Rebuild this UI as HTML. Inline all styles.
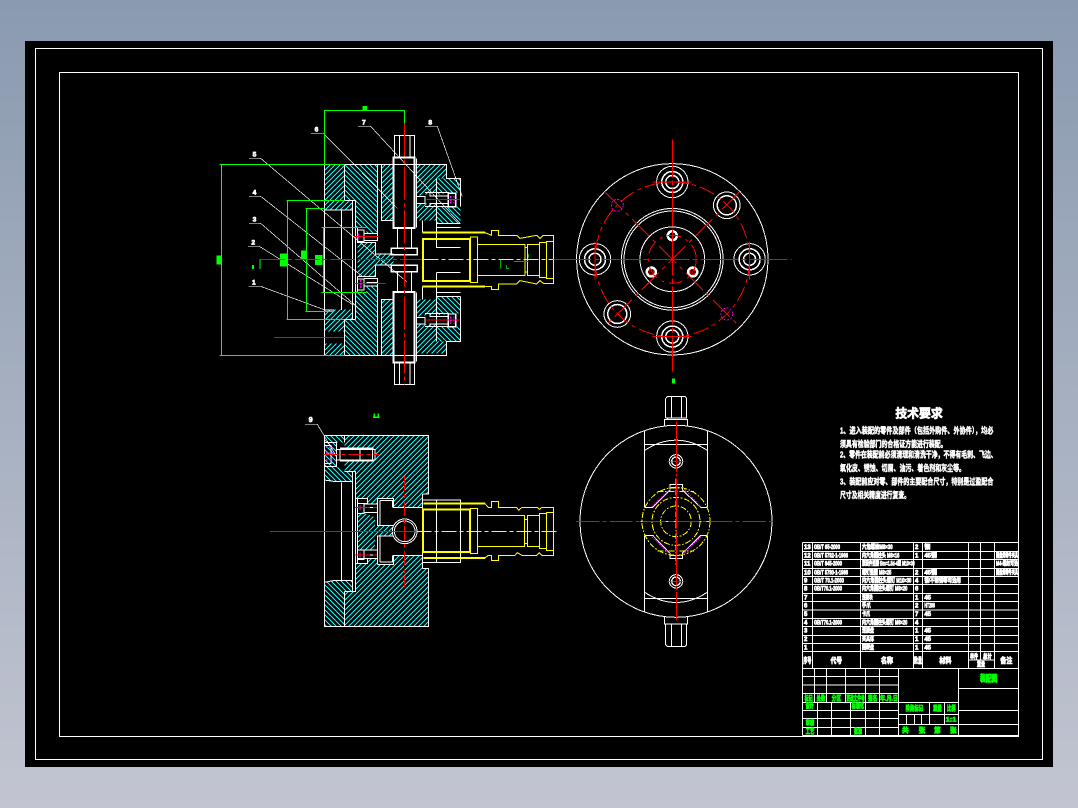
<!DOCTYPE html>
<html><head><meta charset="utf-8">
<style>
html,body{margin:0;padding:0;width:1078px;height:808px;overflow:hidden;background:linear-gradient(#8a9ab0,#c2c5d1)}
svg{display:block;position:absolute;left:0;top:0;shape-rendering:crispEdges}
text{font-family:"Liberation Sans","Noto Sans CJK SC",sans-serif;font-weight:700}
</style></head><body>
<svg width="1078" height="808" viewBox="0 0 1078 808" xmlns="http://www.w3.org/2000/svg" fill="none">
<defs>
<pattern id="a" patternUnits="userSpaceOnUse" width="15" height="15"><path d="M-3 18L18 -3M-3 3L3 -3M12 18L18 12" stroke="#00ffff" stroke-width="3" shape-rendering="crispEdges"/></pattern>
<pattern id="b" patternUnits="userSpaceOnUse" width="15" height="15"><path d="M-3 -3L18 18M-3 12L3 18M12 -3L18 3" stroke="#00ffff" stroke-width="3" shape-rendering="crispEdges"/></pattern>
</defs>
<rect x="25" y="41" width="1028" height="726" fill="#000"/>
<g stroke="#fff" stroke-width="1">
<rect x="35.500" y="48.500" width="1007" height="711"/>
<rect x="59.500" y="72.500" width="959" height="664"/>
</g>

<!-- MAIN VIEW -->
<g transform="translate(210 90) scale(.33333)" stroke-width="3" stroke-linejoin="miter">
<g stroke="none">
<path fill="url(#a)" d="M343 223H403V331H427V360H343ZM372 658H427V688H403V725H343V660ZM343 760H403V796H343Z"/>
<path fill="url(#b)" d="M403 223H503V430H470V412H437V331H403ZM403 688H437V605H470V590H503V796H403Z"/>
<path fill="url(#a)" d="M443 458H497V492H550V525H497V560H443Z"/>
<path fill="url(#a)" d="M514 223H550V392H514ZM514 628H550V796H514Z"/>
<path fill="url(#a)" d="M620 223H710V265H680V308L620 318ZM620 340H680V392H620ZM620 628H680V672L620 680ZM620 702H680V755H710V790H620Z"/>
<path fill="url(#b)" d="M680 265H752V308H715L680 315ZM680 350H752V400H680ZM680 620H752V670L680 675ZM680 710H752V755H680Z"/>
</g>
<g stroke="#fff">
<path d="M343 223H710V265H752V350M343 223V796H710V755H752V620M514 223V392H550M514 796V628H550M403 223V331M403 688V796"/>
<path d="M343 360H427M427 331V688M437 331V688M403 331H437M403 688H437M343 660H372M394 360V660"/>
<path d="M503 223V430M503 590V796M620 223V392M620 628V790"/>
<path d="M680 265V472H752M680 400H752M680 412H752M680 547V755M680 547H752M680 608H752M680 620H752M637 392V428M637 590V628"/>
<path d="M620 320H645V340H620M645 308H715V350H645M660 308V318H715M660 350V340H715"/>
<path d="M620 682H645V702H620M645 670H715V710H645M660 670V680H715M660 710V702H715"/>
<rect x="715" y="310" width="22" height="40" stroke-width="4"/>
<rect x="715" y="672" width="22" height="38" stroke-width="4"/>
<path d="M443 412V458H497V492H550M443 560V605M497 525H550M497 525V560H443"/>
<path d="M443 420H462V455H443M443 567H462V600H443M462 430H503V452H462M462 440H505M462 565H503V588H462M470 578H503"/>
<rect x="551" y="202" width="62" height="212" stroke-width="6"/>
<rect x="551" y="606" width="62" height="212" stroke-width="6"/>
<path d="M553 200V136H613V200M569 136V200M600 136V200M620 205V412M620 607V815M553 820V883H613V820M569 820V883M600 820V883"/>
<path d="M562 414V475M604 414V475M562 543V604M604 543V604"/>
<rect x="544" y="475" width="78" height="19" stroke-width="4"/>
<rect x="544" y="526" width="78" height="19" stroke-width="4"/>
</g>
<g stroke="#fff" stroke-width="2">
<path d="M117 205H152L590 575M117 319H152L458 560M117 400H152L458 665M114 469H148L430 645M115 589H152L345 660M303 130H340L562 355M444 109H482L750 400M645 109H682L757 320"/>
</g>
<g stroke="#0f0">
<path d="M343 223V62H583V130M28 223H403M28 796H403M34 223V796M229 331H403M229 688H403M232 331V688M286 355H343M286 664H372M290 355V664M334 412H470M334 607H470M340 412V607M150 537V508H170"/>
</g>
<g fill="#0f0" stroke="none">
<rect x="458" y="48" width="13" height="14"/><rect x="20" y="497" width="15" height="27"/><rect x="210" y="490" width="23" height="40"/><rect x="273" y="482" width="18" height="25"/><rect x="315" y="495" width="22" height="30"/><rect x="126" y="525" width="6" height="12"/>
</g>
<g stroke="#f00">
<path d="M150 508H640" stroke-dasharray="75 9 12 9"/>
<path d="M583 100V884" stroke-dasharray="100 9 12 9"/>
<path d="M192 742H400M432 440H506M432 580H527M650 328H748M650 690H748"/>
</g>
<path d="M640 508H1048" stroke="#ff0" stroke-dasharray="45 9 12 9"/>
<g stroke="#ff0">
<rect x="639" y="447" width="141" height="126" stroke-width="6"/>
<path d="M638 428H825M638 590H825" stroke-width="6"/>
<path d="M825 428L845 436V422H865V436H920L930 445L980 436L990 445L1000 436H1030V580H1000L990 572L980 582L930 572L920 582H865V598H845V590H825"/>
<rect x="782" y="441" width="21" height="136"/>
<path d="M803 463H945V557H803M945 473H953V546H945"/>
<rect x="953" y="464" width="35" height="92"/><rect x="988" y="458" width="21" height="105"/><rect x="1009" y="454" width="22" height="112"/>
</g>
<path d="M872 510V535M890 525V536H897M912 515H955M955 492V504" stroke="#0a0"/>
<g stroke="#f0f" stroke-width="4" stroke-dasharray="6 3">
<path d="M722 318V340M732 318V340M722 680V702M732 680V702M445 430V450M452 570V595"/>
</g>
<g fill="#fff" stroke="#fff" stroke-width="2" font-size="20">
<text x="128" y="200">5</text><text x="128" y="314">4</text><text x="128" y="395">3</text><text x="124" y="464">2</text><text x="126" y="584">1</text><text x="314" y="125">6</text><text x="456" y="104">7</text><text x="655" y="104">8</text>
</g>
</g>

<!-- TOP RIGHT CIRCLE VIEW -->
<g transform="translate(672.3 259.3)" stroke-width="1">
<g stroke="#fff">
<circle r="95.700"/><circle r="50.800"/><circle r="48.300"/><circle r="32.300"/>
<circle cx="0" cy="-77.300" r="15.700"/><circle cx="0" cy="-77.300" r="10.500" stroke-width="1.500"/><circle cx="0" cy="-77.300" r="6.500" stroke-width="1.500"/>
<circle cx="0" cy="77.300" r="15.700"/><circle cx="0" cy="77.300" r="10.500" stroke-width="1.500"/><circle cx="0" cy="77.300" r="6.500" stroke-width="1.500"/>
<circle cx="-77.300" r="15.700"/><circle cx="-77.300" r="10.500" stroke-width="1.500"/><circle cx="-77.300" r="6" stroke-width="1.500"/>
<circle cx="77.300" r="15.700"/><circle cx="77.300" r="10.500" stroke-width="1.500"/><circle cx="77.300" r="6" stroke-width="1.500"/>
<circle cx="54.500" cy="-54" r="13.300"/><circle cx="54.500" cy="-54" r="9.500" stroke-width="1.500"/>
<circle cx="-55" cy="54.700" r="13.300"/><circle cx="-55" cy="54.700" r="9.500" stroke-width="1.500"/>
<circle cx="0" cy="-23.600" r="4.500" stroke-width="2.500"/><circle cx="-21" cy="12.700" r="4.500" stroke-width="2.500"/><circle cx="20.400" cy="12.700" r="4.500" stroke-width="2.500"/>
</g>
<g stroke="#f00">
<circle r="77.300" stroke-dasharray="16 4 4 4"/>
<circle r="24" stroke-dasharray="14 5 3 5"/>
<path d="M-119 0H119M0 -120V112" stroke-dasharray="38 3 5 3"/>
<path d="M-67 -67L67 67M67 -67L-67 67" stroke-dasharray="24 5 4 5"/>
<path d="M-20 -77.300H19M-20 77.300H19M-77.300 -18V20M77.300 -18V20M-5 -23.600H5M0 -29V-18"/>
<circle cx="-21" cy="12.700" r="2.500"/><circle cx="20.400" cy="12.700" r="2.500"/>
</g>
<g stroke="#e000e0" stroke-dasharray="2 1.500"><circle cx="-55" cy="-54" r="6"/><circle cx="54.500" cy="54.700" r="6"/></g>
<rect x="-0.500" y="119" width="3" height="5" fill="#0f0"/>
</g>

<!-- BOTTOM LEFT SECTION -->
<g transform="translate(260 400) scale(.33333)" stroke-width="3">
<g stroke="none">
<path fill="url(#a)" d="M253 106H505V282H487V322H400V295H352V312H322V295H288V214H253V182L345 178V148H253Z"/>
<path fill="url(#a)" d="M253 574H288V490H322V476H352V494H400V466H487V505H505V680H253Z"/>
<path fill="url(#b)" d="M193 106H253V128H230V200H193ZM193 200H230L253 214H277V247L220 244L193 240ZM193 547L225 541H277V574H253V680H193Z"/>
<path fill="url(#a)" d="M293 338H312L345 352V376H400V410H345V448L293 450Z"/>
</g>
<g stroke="#fff">
<path d="M487 282H505V106H193V680H505V505H487M253 106V128M253 574V680"/>
<path d="M193 128H230V200H193M195 137H213V190H195M230 148H345V180H230M240 148V180M300 148V180M337 148V178" stroke-width="3"/>
<path d="M240 145H340M240 182H340" stroke-width="4"/>
<path d="M253 214H287V574H253M277 214V574M193 240L220 244H277M244 247V541M193 547L225 541H277"/>
<path d="M293 295V490M288 295H322V310H293M288 490H322V476H293M293 340H312V310H293M293 450H312V478H293M312 312H352V338H312M312 450H352V476H312M322 322H352M322 465H352"/>
<path d="M352 295H400V322H487M352 295V376H400M360 302H397V322M360 302V376M352 494H400V466H487M352 494V408H400M360 486H397V466M360 486V410"/>
<circle cx="434" cy="394" r="37"/><circle cx="434" cy="394" r="31"/>
<path d="M487 300H602V488H487M529 300V488M487 282V505"/>
</g>
<path d="M135 73H172L230 170" stroke="#fff" stroke-width="2"/>
<path d="M30 394H470" stroke="#f00"/>
<path d="M433 228V562M190 163H360M285 322H352M285 465H352" stroke="#f00" stroke-dasharray="45 9 12 9"/>
<path d="M470 394H897" stroke="#ff0" stroke-dasharray="45 9 12 9"/>
<g stroke="#ff0">
<rect x="489" y="329" width="141" height="127" stroke-width="6"/>
<path d="M490 311H675M490 474H675" stroke-width="6"/>
<path d="M675 311L685 322H694V304H716V322H770L776 331L786 322H832L838 328L846 322H881V466H846L838 458L830 466H786L772 458L765 466H716V482H694V466H685L675 474"/>
<rect x="632" y="325" width="21" height="136"/>
<path d="M653 346H793V439H653M793 358H803V430H793"/>
<rect x="803" y="346" width="35" height="93"/><rect x="838" y="341" width="21" height="104"/><rect x="859" y="337" width="22" height="114"/>
</g>
<g stroke="#f0f" stroke-width="4" stroke-dasharray="6 3">
<path d="M198 142H218M198 160H222M198 180H218M300 315V330M300 458V474"/>
</g>
<text x="146" y="66" font-size="22" fill="#fff" stroke="#fff" stroke-width="2">9</text>
<path d="M339 52H359M343 40V52M355 40V52" stroke="#0f0" stroke-width="4"/>
</g>

<!-- BOTTOM RIGHT VIEW -->
<g transform="translate(570 390) scale(.33333)" stroke-width="3">
<g stroke="#fff">
<circle cx="318" cy="394" r="288"/>
<path d="M223 122V352M413 122V352M223 436V666M413 436V666M223 163H413M223 625H413"/>
<path d="M223 182C285 140 351 140 413 182M223 606C285 648 351 648 413 606"/>
<path d="M223 352H248L300 300V283H337V300L392 352H413M223 436H248L300 490V505H337V490L392 436H413"/>
<path d="M283 110V88H352V110M293 88V84M287 84V26L293 19H345L350 26V84H287M304 19V84M335 19V84" />
<path d="M283 680V702H352V680M287 702V764L293 770H345L350 764V702ZM304 702V770M335 702V770"/>
<circle cx="318" cy="214" r="20"/><circle cx="318" cy="214" r="13" stroke-width="4"/>
<circle cx="318" cy="574" r="20"/><circle cx="318" cy="574" r="13" stroke-width="4"/>
</g>
<g stroke="#ff0" stroke-dasharray="18 5 5 5">
<circle cx="318" cy="394" r="102"/><circle cx="318" cy="394" r="72"/><circle cx="318" cy="394" r="46"/>
<path d="M212 394H425M318 265V525M262 305H372M262 483H372M300 294H337M300 497H337"/>
</g>
<path d="M245 350L300 298M338 292L392 350M245 440L300 492M338 494L392 440" stroke="#f0f" stroke-dasharray="5 3"/>
<path d="M18 394H615" stroke="#f00" stroke-dasharray="70 9 12 9"/>
<path d="M319 96V692" stroke="#f00" stroke-dasharray="150 6 8 6"/>
<path d="M292 214H344M292 574H344" stroke="#f00" stroke-dasharray="12 3"/>
</g>

<!-- TECH TEXT -->
<g transform="translate(830 400) scale(.33333)" fill="#fff" stroke="#fff" stroke-width="1.500">
<text x="196" y="52" font-size="36" textLength="142" lengthAdjust="spacingAndGlyphs" stroke-width="2">技术要求</text>
<g font-size="25">
<text x="30" y="101" textLength="460" lengthAdjust="spacingAndGlyphs">1、进入装配的零件及部件（包括外购件、外协件），均必</text>
<text x="30" y="141" textLength="320" lengthAdjust="spacingAndGlyphs">须具有检验部门的合格证方能进行装配。</text>
<text x="30" y="172" textLength="470" lengthAdjust="spacingAndGlyphs">2、零件在装配前必须清理和清洗干净，不得有毛刺、飞边、</text>
<text x="30" y="213" textLength="375" lengthAdjust="spacingAndGlyphs">氧化皮、锈蚀、切屑、油污、着色剂和灰尘等。</text>
<text x="30" y="254" textLength="460" lengthAdjust="spacingAndGlyphs">3、装配前应对零、部件的主要配合尺寸，特别是过盈配合</text>
<text x="30" y="294" textLength="210" lengthAdjust="spacingAndGlyphs">尺寸及相关精度进行复查。</text>
</g>
</g>

<!-- TITLE BLOCK -->
<g transform="translate(800 540) scale(.33333)">
<g stroke="#fff" stroke-width="3">
<path d="M7 8H655M7 34H655M7 59H655M7 85H655M7 110H655M7 134H655M7 160H655M7 185H655M7 210H655M7 236H655M7 260H655M7 286H655M7 311H655M7 335H655M7 385H655M7 586H655"/>
<path d="M7 8V586M37 8V385M181 8V385M340 8V385M367 8V385M505 8V385M541 8V360M583 8V385M655 8V586"/>
<path d="M505 360H583"/>
<path d="M7 410H295M7 435H295M7 461H295M7 487H295M7 511H295M7 536H295M7 562H295"/>
<path d="M44 385V487M79 385V487M136 385V487M196 385V586M238 385V586M53 487V586M94 487V586M152 487V586M295 385V586M475 385V586"/>
<path d="M295 487H475M295 523H475M295 553H475M388 487V553M433 487V553M319 523V553M343 523V553M365 523V553"/>
<path d="M475 445H655M475 511H655M475 553H655"/>
</g>
<g fill="#fff" stroke="#fff" stroke-width="2.200" font-size="18">
<text x="12" y="27">13</text><text x="42" y="27" textLength="78" lengthAdjust="spacingAndGlyphs">GB/T 65-2000</text><text x="186" y="27" textLength="92" lengthAdjust="spacingAndGlyphs">六角螺栓M8×30</text><text x="345" y="27">2</text><text x="373" y="27">钢</text>
<text x="12" y="52">12</text><text x="42" y="52" textLength="102" lengthAdjust="spacingAndGlyphs">GB/T 5782-1-1986</text><text x="186" y="52" textLength="112" lengthAdjust="spacingAndGlyphs">内六角圆柱头 M8×16</text><text x="345" y="52">1</text><text x="373" y="52">45钢</text>
<text x="12" y="77">11</text><text x="42" y="77" textLength="84" lengthAdjust="spacingAndGlyphs">GB/T 845-2000</text><text x="186" y="77" textLength="158" lengthAdjust="spacingAndGlyphs">紧固件连接 Bm=1.5d-4型 M10×30</text>
<text x="12" y="103">10</text><text x="42" y="103" textLength="102" lengthAdjust="spacingAndGlyphs">GB/T 5780-1-1986</text><text x="186" y="103" textLength="88" lengthAdjust="spacingAndGlyphs">螺钉垫圈 M8×25</text><text x="345" y="103">2</text><text x="373" y="103">45钢</text>
<text x="12" y="127">9</text><text x="42" y="127" textLength="90" lengthAdjust="spacingAndGlyphs">GB/T 70.1-2000</text><text x="186" y="127" textLength="148" lengthAdjust="spacingAndGlyphs">内六角圆柱头螺钉 M10×30</text><text x="345" y="127">4</text><text x="373" y="127" textLength="110" lengthAdjust="spacingAndGlyphs">钢/不锈钢等可选用</text>
<text x="12" y="152">8</text><text x="42" y="152" textLength="84" lengthAdjust="spacingAndGlyphs">GB/T70.1-2000</text><text x="186" y="152" textLength="136" lengthAdjust="spacingAndGlyphs">内六角圆柱头螺钉 M8×20</text><text x="345" y="152">6</text>
<text x="12" y="178">7</text><text x="186" y="178" textLength="32" lengthAdjust="spacingAndGlyphs">连接块</text><text x="345" y="178">1</text><text x="373" y="178">45</text>
<text x="12" y="202">6</text><text x="186" y="202" textLength="26" lengthAdjust="spacingAndGlyphs">手爪</text><text x="345" y="202">2</text><text x="373" y="202" textLength="32" lengthAdjust="spacingAndGlyphs">HT200</text>
<text x="12" y="228">5</text><text x="186" y="228" textLength="24" lengthAdjust="spacingAndGlyphs">卡爪</text><text x="345" y="228">7</text><text x="373" y="228">45</text>
<text x="12" y="253">4</text><text x="42" y="253" textLength="84" lengthAdjust="spacingAndGlyphs">GB/T70.1-2000</text><text x="186" y="253" textLength="136" lengthAdjust="spacingAndGlyphs">内六角圆柱头螺钉 M6×20</text><text x="345" y="253">4</text>
<text x="12" y="278">3</text><text x="186" y="278" textLength="36" lengthAdjust="spacingAndGlyphs">连接盘</text><text x="345" y="278">1</text><text x="373" y="278">45</text>
<text x="12" y="303">2</text><text x="186" y="303" textLength="36" lengthAdjust="spacingAndGlyphs">夹具体</text><text x="345" y="303">1</text><text x="373" y="303">45</text>
<text x="12" y="329">1</text><text x="186" y="329" textLength="36" lengthAdjust="spacingAndGlyphs">回转盘</text><text x="345" y="329">1</text><text x="373" y="329">45</text>
<text x="588" y="52" textLength="66" lengthAdjust="spacingAndGlyphs">圆盘类零件夹具</text><text x="588" y="77" textLength="66" lengthAdjust="spacingAndGlyphs">M4-螺纹可选</text><text x="588" y="103" textLength="66" lengthAdjust="spacingAndGlyphs">圆盘类零件夹具</text>
</g>
<g fill="#fff" stroke="#fff" stroke-width="2.500" font-size="23">
<text x="10" y="369" textLength="24" lengthAdjust="spacingAndGlyphs">序号</text><text x="92" y="369" textLength="34" lengthAdjust="spacingAndGlyphs">代号</text><text x="243" y="369" textLength="36" lengthAdjust="spacingAndGlyphs">名称</text><text x="342" y="369" textLength="24" lengthAdjust="spacingAndGlyphs">数量</text><text x="418" y="369" textLength="36" lengthAdjust="spacingAndGlyphs">材料</text><text x="601" y="369" textLength="36" lengthAdjust="spacingAndGlyphs">备注</text>
<text x="510" y="355" font-size="18" textLength="24" lengthAdjust="spacingAndGlyphs">单件</text><text x="549" y="355" font-size="18" textLength="26" lengthAdjust="spacingAndGlyphs">总计</text><text x="531" y="379" font-size="18" textLength="24" lengthAdjust="spacingAndGlyphs">重量</text>
</g>
<g fill="#0f0" stroke="#0f0" stroke-width="2.200" font-size="20">
<text x="14" y="481" textLength="24" lengthAdjust="spacingAndGlyphs">标记</text><text x="50" y="481" textLength="26" lengthAdjust="spacingAndGlyphs">处数</text><text x="95" y="481" textLength="28" lengthAdjust="spacingAndGlyphs">分区</text><text x="139" y="481" textLength="55" lengthAdjust="spacingAndGlyphs">更改文件号</text><text x="204" y="481" textLength="28" lengthAdjust="spacingAndGlyphs">签名</text><text x="240" y="481" textLength="54" lengthAdjust="spacingAndGlyphs">年.月.日</text>
<text x="17" y="504" textLength="24" lengthAdjust="spacingAndGlyphs">设计</text><text x="155" y="504" textLength="37" lengthAdjust="spacingAndGlyphs">标准化</text><text x="17" y="555" textLength="26" lengthAdjust="spacingAndGlyphs">审核</text><text x="17" y="581" textLength="26" lengthAdjust="spacingAndGlyphs">工艺</text><text x="162" y="581" textLength="24" lengthAdjust="spacingAndGlyphs">批准</text>
<text x="317" y="511" textLength="52" lengthAdjust="spacingAndGlyphs">阶段标记</text><text x="399" y="511" textLength="26" lengthAdjust="spacingAndGlyphs">重量</text><text x="441" y="511" textLength="26" lengthAdjust="spacingAndGlyphs">比例</text><text x="437" y="545" textLength="32" lengthAdjust="spacingAndGlyphs">1:1</text>
<text x="306" y="577">共</text><text x="356" y="577">张</text><text x="402" y="577">第</text><text x="450" y="577">张</text>
<text x="540" y="425" font-size="27" stroke-width="2.500" textLength="52" lengthAdjust="spacingAndGlyphs">装配图</text>
</g>
</g>
</svg>
</body></html>
